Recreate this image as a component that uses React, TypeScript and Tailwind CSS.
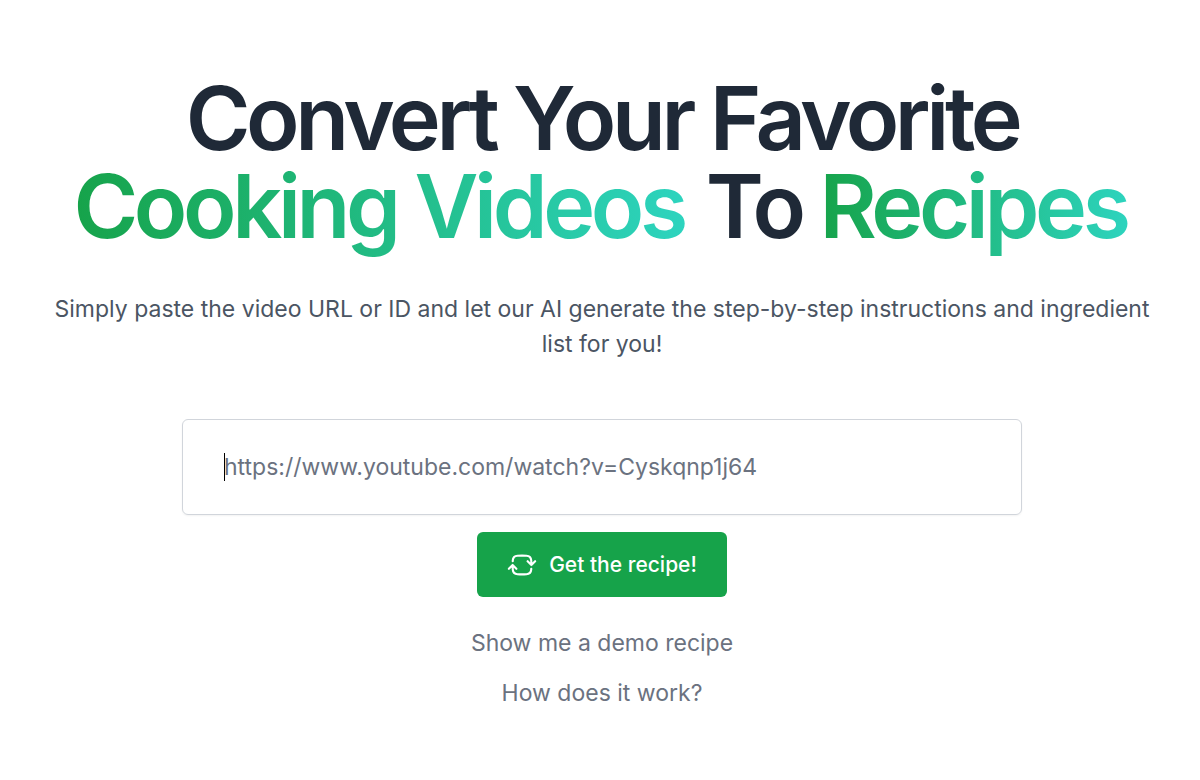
import React from "react";

const gradient = "bg-linear-to-r/srgb from-[#16a34a] to-[#2dd4bf] bg-clip-text pr-1 text-transparent";

export default function App() {
  return (
    <main className="min-h-screen bg-white px-9 pt-[74px] pb-16 font-['Inter',sans-serif] text-[#4b5563]">
      <div className="flex flex-col items-center pl-1 text-center">
        <h1 className="text-[88px] leading-[88px] font-semibold tracking-tighter text-[#1f2937]">
          Convert Your Favorite
          <br />
          <span className={gradient}>Cooking Videos</span> To <span className={gradient}>Recipes</span>
        </h1>
        <p className="mt-[42px] text-[23px] leading-[35px]">
          Simply paste the video URL or ID and let our AI generate the step-by-step instructions and ingredient list for you!
        </p>
        <form className="mt-[57px] flex w-full max-w-[840px] flex-col items-center" onSubmit={(e) => e.preventDefault()}>
          <div className="relative w-full">
            <input
              type="text"
              autoFocus
              aria-label="Video URL or ID"
              placeholder="https://www.youtube.com/watch?v=Cyskqnp1j64"
              className="block h-24 w-full rounded-md border border-[#d1d5db] px-[41px] text-[23px] text-gray-900 caret-transparent shadow-xs outline-none placeholder:text-[#6b7280]"
            />
            <span aria-hidden="true" className="absolute top-[34px] left-[42px] h-7 w-px bg-black" />
          </div>
          <button
            type="submit"
            className="mt-[17px] flex h-[65px] items-center gap-3 rounded-md bg-[#16a34a] px-[30px] text-[21px] font-medium text-white"
          >
            <svg className="size-[30px]" viewBox="0 0 24 24" fill="none" stroke="currentColor" strokeWidth="1.7" strokeLinecap="round" strokeLinejoin="round" aria-hidden="true">
              <path d="M19.5 12c0-1.232-.046-2.453-.138-3.662a4.006 4.006 0 00-3.7-3.7 48.678 48.678 0 00-7.324 0 4.006 4.006 0 00-3.7 3.7c-.017.22-.032.441-.046.662M19.5 12l3-3m-3 3l-3-3m-12 3c0 1.232.046 2.453.138 3.662a4.006 4.006 0 003.7 3.7 48.656 48.656 0 007.324 0 4.006 4.006 0 003.7-3.7c.017-.22.032-.441.046-.662M4.5 12l3 3m-3-3l-3 3" />
            </svg>
            Get the recipe!
          </button>
        </form>
        <a href="#demo" className="mt-7 text-[23px] leading-9 text-[#6b7280]">Show me a demo recipe</a>
        <a href="#how" className="mt-[14px] text-[23px] leading-9 text-[#6b7280]">How does it work?</a>
      </div>
    </main>
  );
}
